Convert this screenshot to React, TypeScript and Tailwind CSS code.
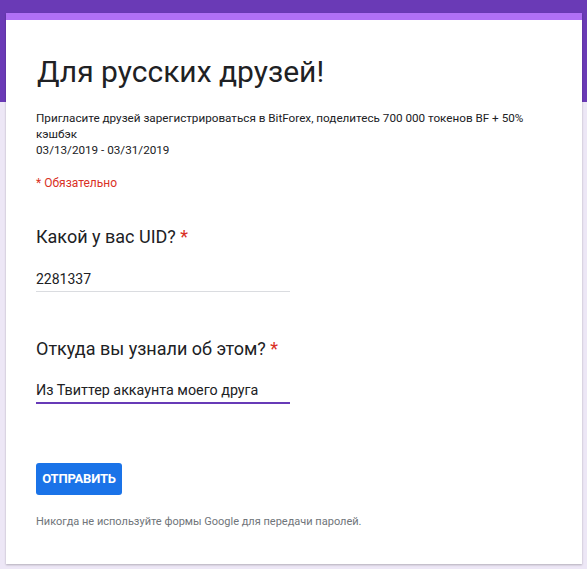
import React from 'react';

const Question = ({ title, answer, active }: { title: string; answer: string; active?: boolean }) => (
  <div>
    <div className="text-[18px] leading-6 text-[#202124]">
      {title} <span className="text-[#d93025]">*</span>
    </div>
    <div
      className={
        active
          ? 'mt-[19px] w-[254px] border-b-2 border-[#673ab7] pb-[2px] text-[14.3px] leading-5 text-[#202124]'
          : 'mt-[20px] w-[254px] border-b border-[#dadce0] pb-[2px] text-[14px] leading-5 text-[#202124]'
      }
    >
      {answer}
    </div>
  </div>
);

export default function App() {
  return (
    <div className="min-h-screen bg-[linear-gradient(#6a3ab6_0,#6a3ab6_102px,#ede7f6_102px)] pt-[13px] pb-1 pl-[6px] pr-[5px] font-['Roboto',sans-serif]">
      <div className="bg-white border-t-[7px] border-[#b070f6] shadow-[0_1px_2px_rgba(0,0,0,0.25)] px-[30px] pt-[32px] pb-[34px]">
        {/* Header */}
        <h1 className="pl-[1px] text-[30px] leading-10 text-[#202124]">Для русских друзей!</h1>
        <div className="mt-[18px] text-[11.7px] leading-4 text-[#202124]">
          <p>Пригласите друзей зарегистрироваться в BitForex, поделитесь 700 000 токенов BF + 50% кэшбэк</p>
          <p>03/13/2019 - 03/31/2019</p>
        </div>
        <div className="mt-[17px] text-[12px] leading-4 text-[#d93025]">* Обязательно</div>

        {/* Questions */}
        <div className="mt-[34px]">
          <Question title="Какой у вас UID?" answer="2281337" />
        </div>
        <div className="mt-[45px]">
          <Question title="Откуда вы узнали об этом?" answer="Из Твиттер аккаунта моего друга" active />
        </div>

        <button className="mt-[59px] flex h-8 w-[86px] items-center justify-center rounded-[3px] bg-[#1a73e8] text-[13px] font-bold tracking-[-0.2px] text-white">
          ОТПРАВИТЬ
        </button>

        <p className="mt-[19px] text-[11px] leading-4 text-[#70757a]">
          Никогда не используйте формы Google для передачи паролей.
        </p>
      </div>
    </div>
  );
}
